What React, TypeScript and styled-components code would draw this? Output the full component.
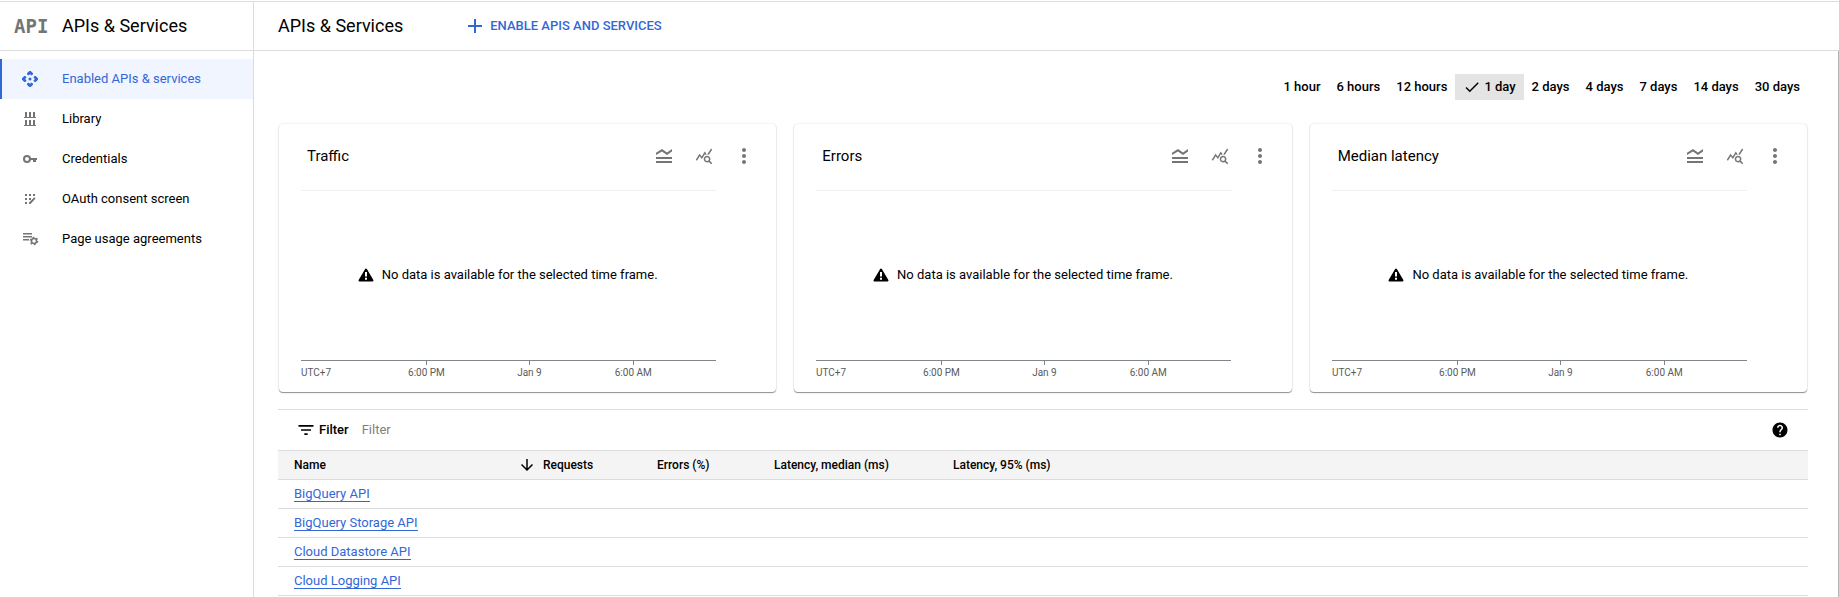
import React from "react";
import styled, { createGlobalStyle, css } from "styled-components";
import {
  MdAdd,
  MdArrowDownward,
  MdCheck,
  MdFilterList,
  MdHelp,
  MdLegendToggle,
  MdMoreVert,
  MdQueryStats,
} from "react-icons/md";

const color = {
  text: "#000000",
  blue: "#3367d6",
  activeBg: "#f0f5ff",
  icon: "#757575",
  line: "#dcdcdc",
  headBg: "#f4f4f4",
  axis: "#80868b",
};

const GlobalStyle = createGlobalStyle`
  *, *::before, *::after { box-sizing: border-box; }
  body {
    margin: 0;
    background: #ffffff;
    color: ${color.text};
    font: 400 13px/20px Roboto, "Liberation Sans", sans-serif;
  }
  button, input { font: inherit; color: inherit; }
`;

const Page = styled.div`
  display: flex;
  min-height: 100vh;
  padding-top: 1px;
`;

const Sidebar = styled.aside`
  flex: none;
  width: 254px;
  border-top: 1px solid ${color.line};
  border-right: 1px solid ${color.line};
`;

const Main = styled.main`
  flex: 1;
  min-width: 0;
  display: flex;
  flex-direction: column;
  border-top: 1px solid ${color.line};
`;

const Bar = styled.header`
  display: flex;
  align-items: center;
  height: 49px;
  border-bottom: 1px solid ${color.line};
`;

const SideBar = styled(Bar)`
  padding-left: 14px;
`;

const MainBar = styled(Bar)`
  padding-left: 24px;
  gap: 60px;
`;

const ApiLogo = styled.span`
  width: 48px;
  font: 700 19px/24px "DejaVu Sans Mono", monospace;
  color: ${color.icon};
`;

const Title = styled.div`
  font-size: 18px;
  line-height: 24px;
`;

const PageTitle = styled.h1`
  margin: 0;
  font-size: 18px;
  font-weight: 400;
  line-height: 24px;
`;

const PrimaryAction = styled.button`
  display: flex;
  align-items: center;
  gap: 3px;
  padding: 0;
  border: 0;
  background: none;
  color: ${color.blue};
  font-size: 13px;
  font-weight: 500;
  text-transform: uppercase;
  cursor: pointer;
`;

const Nav = styled.nav`
  display: flex;
  flex-direction: column;
  padding-top: 8px;
`;

const NavLink = styled.a<{ $active?: boolean }>`
  display: flex;
  align-items: center;
  gap: 23px;
  height: 40px;
  padding-left: 19px;
  border-left: 2px solid transparent;
  color: ${color.text};
  text-decoration: none;
  svg { color: ${color.icon}; fill: currentColor; }
  ${(p) =>
    p.$active &&
    css`
      border-left-color: ${color.blue};
      background: ${color.activeBg};
      color: ${color.blue};
      svg { color: ${color.blue}; }
    `}
`;

const Content = styled.div`
  flex: 1;
  padding: 23px 30px 0 24px;
  border-right: 1px solid #b4b4b4;
`;

const Ranges = styled.div`
  display: flex;
  justify-content: flex-end;
  margin-bottom: 24px;
`;

const RangeButton = styled.button<{ $selected?: boolean }>`
  display: flex;
  align-items: center;
  gap: 3px;
  height: 26px;
  padding: 0 8px;
  border: 0;
  background: ${(p) => (p.$selected ? "#e4e4e4" : "none")};
  font-weight: 500;
  cursor: pointer;
`;

const Cards = styled.div`
  display: grid;
  grid-template-columns: repeat(3, 1fr);
  gap: 18px;
  padding: 0 1px;
`;

const Card = styled.section`
  height: 268px;
  border-radius: 4px;
  box-shadow: 0 1px 1px rgba(0, 0, 0, 0.42), 0 0 2px rgba(0, 0, 0, 0.16);
`;

const CardHead = styled.div`
  display: flex;
  align-items: center;
  height: 64px;
  margin-bottom: 2px;
  padding: 0 12px 0 28px;
`;

const CardTitle = styled.h2`
  flex: 1;
  margin: 0;
  font-size: 15px;
  font-weight: 400;
`;

const IconButton = styled.button`
  display: flex;
  align-items: center;
  justify-content: center;
  width: 40px;
  height: 40px;
  padding: 0;
  border: 0;
  background: none;
  color: ${color.icon};
  cursor: pointer;
`;

const Chart = styled.div`
  padding: 0 60px 0 22px;
`;

const Plot = styled.div`
  display: flex;
  align-items: center;
  justify-content: center;
  gap: 8px;
  height: 170px;
  padding: 0 2px 2px 0;
  border-top: 1px solid #f1f1f1;
`;

const Axis = styled.svg`
  display: block;
  width: 100%;
  height: 20px;
  overflow: visible;
  line { stroke: ${color.axis}; shape-rendering: crispEdges; }
  text { font-size: 10px; fill: #5a5a5a; }
`;

const FilterBar = styled.label`
  display: flex;
  align-items: center;
  height: 41px;
  margin-top: 17px;
  padding: 0 18px;
  border-top: 1px solid ${color.line};
`;

const FilterLabel = styled.span`
  margin-left: 3px;
  font-weight: 500;
`;

const FilterInput = styled.input`
  flex: 1;
  margin-left: 13px;
  padding: 0;
  border: 0;
  outline: 0;
  background: none;
  &::placeholder { color: #808080; opacity: 1; }
`;

const HelpButton = styled(IconButton)`
  width: 20px;
  height: 20px;
  color: #000000;
`;

const Table = styled.table`
  width: 100%;
  table-layout: fixed;
  border-collapse: collapse;
`;

const Th = styled.th<{ $width?: number }>`
  width: ${(p) => (p.$width ? `${p.$width}px` : "auto")};
  height: 29px;
  padding: 0 0 0 7px;
  border-top: 1px solid ${color.line};
  border-bottom: 1px solid ${color.line};
  background: ${color.headBg};
  font-size: 12px;
  font-weight: 500;
  text-align: left;
  &:first-child { padding-left: 16px; }
`;

const Sortable = styled.div`
  display: flex;
  align-items: center;
  justify-content: space-between;
`;

const Td = styled.td`
  height: 29px;
  padding: 0 0 0 16px;
  border-bottom: 1px solid ${color.line};
`;

const ApiLink = styled.a`
  display: inline-block;
  height: 17px;
  line-height: 17px;
  border-bottom: 1px solid ${color.blue};
  color: ${color.blue};
  text-decoration: none;
`;

const ApiIcon = () => (
  <svg width="18" height="18" viewBox="0 0 18 18" aria-hidden="true">
    <circle cx="9" cy="9" r="1.500" />
    {[0, 90, 180, 270].map((a) => (
      <path
        key={a}
        transform={`rotate(${a} 9 9)`}
        d="M8.300 1h1.400L12 3.300v1L10.700 5.600L9 4.200L7.300 5.600L6 4.300v-1z"
      />
    ))}
  </svg>
);

const LibraryIcon = () => (
  <svg width="18" height="18" viewBox="0 0 18 18" aria-hidden="true">
    <path d="M3 7h12v1H3zM3 15h12v1H3zM4 2h2v5H4zM8 2h2v5H8zM12 2h2v5h-2zM4 10h2v5H4zM8 10h2v5H8zM12 10h2v5h-2z" />
  </svg>
);

const KeyIcon = () => (
  <svg width="18" height="18" viewBox="0 0 18 18" aria-hidden="true">
    <circle cx="6" cy="9" r="3" fill="none" stroke="currentColor" strokeWidth="2" />
    <path d="M9 8h7v2h-1v2h-3v-2H9z" />
  </svg>
);

const ConsentIcon = () => (
  <svg width="18" height="18" viewBox="0 0 18 18" aria-hidden="true">
    <path d="M4 4h2v2H4zM8 4h2v2H8zM12 4h2v2h-2zM4 8h2v2H4zM8 8h2v2H8zM4 12h2v2H4zM8 14v-1.500l5.300-5.300 1.300 1.300L9.500 14z" />
  </svg>
);

const AgreementIcon = () => (
  <svg width="18" height="18" viewBox="0 0 18 18" aria-hidden="true">
    <path d="M2 3h9v1.500H2zM2 6h9v1.500H2zM2 9h6v1.500H2z" />
    <circle cx="13" cy="11" r="2.500" fill="none" stroke="currentColor" strokeWidth="1.500" />
    <circle cx="13" cy="11" r="3.700" fill="none" stroke="currentColor" strokeWidth="1.200" strokeDasharray="1.900 1.970" />
  </svg>
);

const WarningIcon = () => (
  <svg width="16" height="16" viewBox="0 0 16 16" aria-hidden="true">
    <path d="M8 2.500L14.500 13.500H1.500z" stroke="#000" strokeWidth="2" strokeLinejoin="round" />
    <path d="M7 5h2v4.500H7zM7 10.800h2v2H7z" fill="#fff" />
  </svg>
);

const navItems = [
  { label: "Enabled APIs & services", icon: <ApiIcon />, active: true },
  { label: "Library", icon: <LibraryIcon /> },
  { label: "Credentials", icon: <KeyIcon /> },
  { label: "OAuth consent screen", icon: <ConsentIcon /> },
  { label: "Page usage agreements", icon: <AgreementIcon /> },
];

const ranges = ["1 hour", "6 hours", "12 hours", "1 day", "2 days", "4 days", "7 days", "14 days", "30 days"];

const ticks = [
  { at: "30.200%", label: "6:00 PM" },
  { at: "55%", label: "Jan 9" },
  { at: "80%", label: "6:00 AM" },
];

const apis = ["BigQuery API", "BigQuery Storage API", "Cloud Datastore API", "Cloud Logging API"];

function MetricCard({ title }: { title: string }) {
  return (
    <Card>
      <CardHead>
        <CardTitle>{title}</CardTitle>
        <IconButton aria-label="Toggle legend"><MdLegendToggle size={24} /></IconButton>
        <IconButton aria-label="Explore data"><MdQueryStats size={18} /></IconButton>
        <IconButton aria-label="More options"><MdMoreVert size={24} /></IconButton>
      </CardHead>
      <Chart>
        <Plot>
          <WarningIcon />
          <span>No data is available for the selected time frame.</span>
        </Plot>
        <Axis>
          <line x1="0" x2="100%" y1="0.5" y2="0.5" />
          <text x="0" y="16">UTC+7</text>
          {ticks.map((t) => (
            <React.Fragment key={t.label}>
              <line x1={t.at} x2={t.at} y1="0" y2="5" />
              <text x={t.at} y="16" textAnchor="middle">{t.label}</text>
            </React.Fragment>
          ))}
        </Axis>
      </Chart>
    </Card>
  );
}

export default function App() {
  return (
    <>
      <GlobalStyle />
      <Page>
        <Sidebar>
          <SideBar>
            <ApiLogo>API</ApiLogo>
            <Title>APIs &amp; Services</Title>
          </SideBar>
          <Nav>
            {navItems.map((item) => (
              <NavLink key={item.label} href="#" $active={item.active}>
                {item.icon}
                {item.label}
              </NavLink>
            ))}
          </Nav>
        </Sidebar>
        <Main>
          <MainBar>
            <PageTitle>APIs &amp; Services</PageTitle>
            <PrimaryAction>
              <MdAdd size={24} />
              Enable APIs and services
            </PrimaryAction>
          </MainBar>
          <Content>
            <Ranges>
              {ranges.map((r) => (
                <RangeButton key={r} $selected={r === "1 day"}>
                  {r === "1 day" && <MdCheck size={18} />}
                  {r}
                </RangeButton>
              ))}
            </Ranges>
            <Cards>
              <MetricCard title="Traffic" />
              <MetricCard title="Errors" />
              <MetricCard title="Median latency" />
            </Cards>
            <FilterBar>
              <MdFilterList size={20} />
              <FilterLabel>Filter</FilterLabel>
              <FilterInput placeholder="Filter" />
              <HelpButton aria-label="Help"><MdHelp size={18} /></HelpButton>
            </FilterBar>
            <Table>
              <thead>
                <tr>
                  <Th $width={258}>
                    <Sortable>
                      Name
                      <MdArrowDownward size={18} />
                    </Sortable>
                  </Th>
                  <Th $width={114}>Requests</Th>
                  <Th $width={117}>Errors (%)</Th>
                  <Th $width={179}>Latency, median (ms)</Th>
                  <Th>Latency, 95% (ms)</Th>
                </tr>
              </thead>
              <tbody>
                {apis.map((name) => (
                  <tr key={name}>
                    <Td><ApiLink href="#">{name}</ApiLink></Td>
                    <Td />
                    <Td />
                    <Td />
                    <Td />
                  </tr>
                ))}
              </tbody>
            </Table>
          </Content>
        </Main>
      </Page>
    </>
  );
}
